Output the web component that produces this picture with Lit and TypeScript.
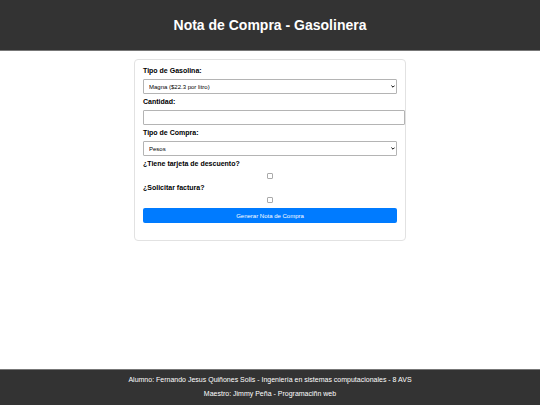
import { LitElement, html, css } from "lit";
import { customElement } from "lit/decorators.js";

@customElement("app-root")
export class AppRoot extends LitElement {
  static styles = css`
    :host {
      display: flex;
      flex-direction: column;
      min-height: 100vh;
      background: #fff;
      color: #000;
      font-family: "Liberation Sans", Arial, sans-serif;
      font-size: 7px;
      line-height: 8px;
    }
    header {
      background: #333;
      color: #fff;
      text-align: center;
      padding: 17px 8px;
      border-bottom: 1px solid #777;
    }
    h1 {
      margin: 0;
      font-size: 14px;
      line-height: 16px;
    }
    main {
      flex: 1;
      padding: 8px 0;
    }
    form {
      display: flex;
      flex-direction: column;
      gap: 4px;
      width: calc(50% - 16px);
      margin: 0 auto;
      padding: 7px 8px 17px;
      border: 1px solid #e2e2e2;
      border-radius: 4px;
    }
    label {
      font-weight: bold;
    }
    select,
    .amount {
      box-sizing: border-box;
      height: 15px;
      margin: 0;
      border: 1px solid #b4b4b4;
      border-radius: 1px;
      background: #fff;
      color: #000;
      font-family: inherit;
      font-size: 6px;
    }
    .picker {
      display: grid;
      align-items: center;
    }
    .picker > * {
      grid-area: 1 / 1;
    }
    select {
      appearance: none;
      width: 100%;
      padding: 0 5px;
    }
    .arrow {
      justify-self: end;
      width: 4px;
      height: 3px;
      margin-right: 2px;
      pointer-events: none;
    }
    .amount {
      width: calc(100% + 8px);
      padding: 0 5px;
    }
    .check {
      appearance: none;
      box-sizing: border-box;
      align-self: center;
      width: 6px;
      height: 6px;
      margin: 1px 0;
      border: 1px solid #aaa;
      border-radius: 1px;
      background: #fff;
    }
    .check:checked {
      background: #007bff;
    }
    button {
      height: 15px;
      padding: 0;
      border: 0;
      border-radius: 2px;
      background: #007bff;
      color: #fff;
      font-family: inherit;
      font-size: 6px;
    }
    footer {
      display: flex;
      flex-direction: column;
      gap: 6px;
      padding: 6px 8px 7px;
      border-top: 1px solid #777;
      background: #333;
      color: #fff;
      text-align: center;
    }
    p {
      margin: 0;
    }
  `;

  private arrow() {
    return html`<svg class="arrow" viewBox="0 0 4 3" aria-hidden="true">
      <path d="M0.4 0.6 L2 2.2 L3.6 0.6" fill="none" stroke="#000" stroke-width="1" />
    </svg>`;
  }

  render() {
    return html`
      <header><h1>Nota de Compra - Gasolinera</h1></header>
      <main>
        <form @submit=${(e: Event) => e.preventDefault()}>
          <label for="fuel">Tipo de Gasolina:</label>
          <div class="picker">
            <select id="fuel">
              <option>Magna ($22.3 por litro)</option>
            </select>
            ${this.arrow()}
          </div>
          <label for="amount">Cantidad:</label>
          <input class="amount" id="amount" type="text" inputmode="decimal" />
          <label for="kind">Tipo de Compra:</label>
          <div class="picker">
            <select id="kind">
              <option>Pesos</option>
            </select>
            ${this.arrow()}
          </div>
          <label for="discount">¿Tiene tarjeta de descuento?</label>
          <input class="check" id="discount" type="checkbox" />
          <label for="invoice">¿Solicitar factura?</label>
          <input class="check" id="invoice" type="checkbox" />
          <button type="submit">Generar Nota de Compra</button>
        </form>
      </main>
      <footer>
        <p>Alumno: Fernando Jesus Quiñones Solis - Ingeniería en sistemas computacionales - 8 AVS</p>
        <p>Maestro: Jimmy Peña - Programaciñn web</p>
      </footer>
    `;
  }
}
